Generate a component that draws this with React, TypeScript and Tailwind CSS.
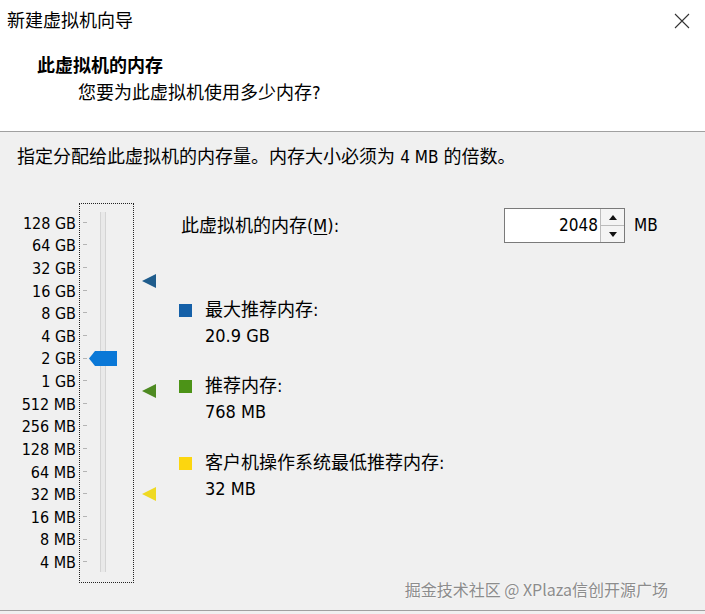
import React from "react";

// Latin text in a Tahoma-like face, CJK falls back to Noto
const FONT = "font-['DejaVu_Sans_Condensed','DejaVu_Sans','Noto_Sans_CJK_SC',sans-serif]";

const SCALE = [
    "128 GB", "64 GB", "32 GB", "16 GB", "8 GB", "4 GB", "2 GB", "1 GB",
    "512 MB", "256 MB", "128 MB", "64 MB", "32 MB", "16 MB", "8 MB", "4 MB",
];

const Marker: React.FC<{ color: string; className?: string }> = ({ color, className }) => (
    <svg width="14" height="14" viewBox="0 0 14 14" className={className}>
        <polygon points="0,7 14,0 14,14" fill={color} />
    </svg>
);

const MemoryRow: React.FC<{ color: string; label: string; value: string; className?: string }> = ({
    color,
    label,
    value,
    className,
}) => (
    <div className={className}>
        <div className="flex items-center h-[24px]">
            <span className={`w-[13px] h-[13px] ${color}`} />
            <span className="ml-[13px] text-[18px] leading-[24px]">{label}</span>
        </div>
        <div className="pl-[26px] pt-[2px] text-[18px] leading-[24px]">{value}</div>
    </div>
);

const App: React.FC = () => {
    return (
        <div className={`w-[705px] h-[614px] bg-[#f0f0f0] text-black relative overflow-hidden ${FONT}`}>
            {/* Header */}
            <div className="h-[132px] bg-white border-b border-[#a0a0a0]">
                <div className="h-[42px] flex items-center justify-between pl-[7px] pr-[15px]">
                    <span className="text-[18px] leading-[24px]">新建虚拟机向导</span>
                    <svg width="16" height="16" viewBox="0 0 16 16">
                        <path d="M1 1 L15 15 M15 1 L1 15" stroke="#333" strokeWidth="1.1" fill="none" />
                    </svg>
                </div>
                <div className="mt-[12px] pl-[37px] text-[18px] leading-[24px] font-bold">此虚拟机的内存</div>
                <div className="mt-[3px] pl-[78px] text-[18px] leading-[24px]">您要为此虚拟机使用多少内存?</div>
            </div>

            {/* Body */}
            <div className="h-[479px] border-b border-[#a0a0a0]">
                <p className="pt-[13px] pl-[17px] text-[18px] leading-[24px]">
                    指定分配给此虚拟机的内存量。内存大小必须为 <span className="text-[17px]">4 MB</span> 的倍数。
                </p>

                <div className="mt-[34px] flex">
                    {/* Scale labels */}
                    <div className="w-[76px] pt-[9.7px] flex flex-col items-end text-[16px]">
                        {SCALE.map((s) => (
                            <div key={s} className="h-[22.63px] leading-[22.63px]">
                                {s}
                            </div>
                        ))}
                    </div>

                    {/* Slider */}
                    <div className="ml-[3px] w-[55px] h-[380px] border border-dotted border-[#222] relative flex pl-[3px] pt-[7px]">
                        <div className="flex flex-col w-[5px]">
                            {SCALE.map((s) => (
                                <div key={s} className="h-[22.63px] flex items-center">
                                    <span className="w-[4px] h-px bg-[#b4b4b4]" />
                                </div>
                            ))}
                        </div>
                        <div className="ml-[12px] mt-[1px] w-[6px] h-[360px] bg-[#e9e9e9] border-x border-[#d4d4d4]" />
                        <svg width="28" height="15" viewBox="0 0 28 15" className="absolute left-[9px] top-[147px]">
                            <polygon points="0,7.5 6,0 28,0 28,15 6,15" fill="#0a78d7" />
                        </svg>
                    </div>

                    {/* Markers */}
                    <div className="ml-[8px] flex flex-col">
                        <Marker color="#1f5c8c" className="mt-[71px]" />
                        <Marker color="#4e8a22" className="mt-[96px]" />
                        <Marker color="#efd922" className="mt-[89px]" />
                    </div>

                    {/* Right pane */}
                    <div className="ml-[23px] flex-1">
                        <div className="mt-[5px] flex items-center h-[35px]">
                            <span className="w-[325px] pl-[2px] text-[18px] leading-[24px]">
                                此虚拟机的内存(<span className="underline underline-offset-2">M</span>):
                            </span>
                            <div className="flex w-[121px] h-[35px] border border-[#7a7a7a] bg-white">
                                <div className="flex-1 flex items-center justify-end pr-[2px] text-[17px]">2048</div>
                                <div className="w-[24px] flex flex-col border-l border-[#bcbcbc]">
                                    <div className="flex-1 flex items-center justify-center border-b border-[#bcbcbc] bg-[#f4f4f4]">
                                        <svg width="8" height="5" viewBox="0 0 8 5">
                                            <polygon points="4,0 8,5 0,5" fill="#111" />
                                        </svg>
                                    </div>
                                    <div className="flex-1 flex items-center justify-center bg-[#f4f4f4]">
                                        <svg width="8" height="5" viewBox="0 0 8 5">
                                            <polygon points="0,0 8,0 4,5" fill="#111" />
                                        </svg>
                                    </div>
                                </div>
                            </div>
                            <span className="ml-[9px] text-[17px]">MB</span>
                        </div>

                        <MemoryRow className="mt-[55px]" color="bg-[#1560a8]" label="最大推荐内存:" value="20.9 GB" />
                        <MemoryRow className="mt-[26px]" color="bg-[#4c9317]" label="推荐内存:" value="768 MB" />
                        <MemoryRow className="mt-[27px]" color="bg-[#fcd60f]" label="客户机操作系统最低推荐内存:" value="32 MB" />
                    </div>
                </div>
            </div>

            {/* Watermark */}
            <span className="absolute right-[37px] top-[577px] text-[16px] leading-[24px] text-[#8c8c8c] font-['Noto_Sans_CJK_SC',sans-serif] [text-shadow:0_0_2px_#fff]">
                掘金技术社区 @ XPlaza信创开源广场
            </span>
        </div>
    );
};

export default App;
